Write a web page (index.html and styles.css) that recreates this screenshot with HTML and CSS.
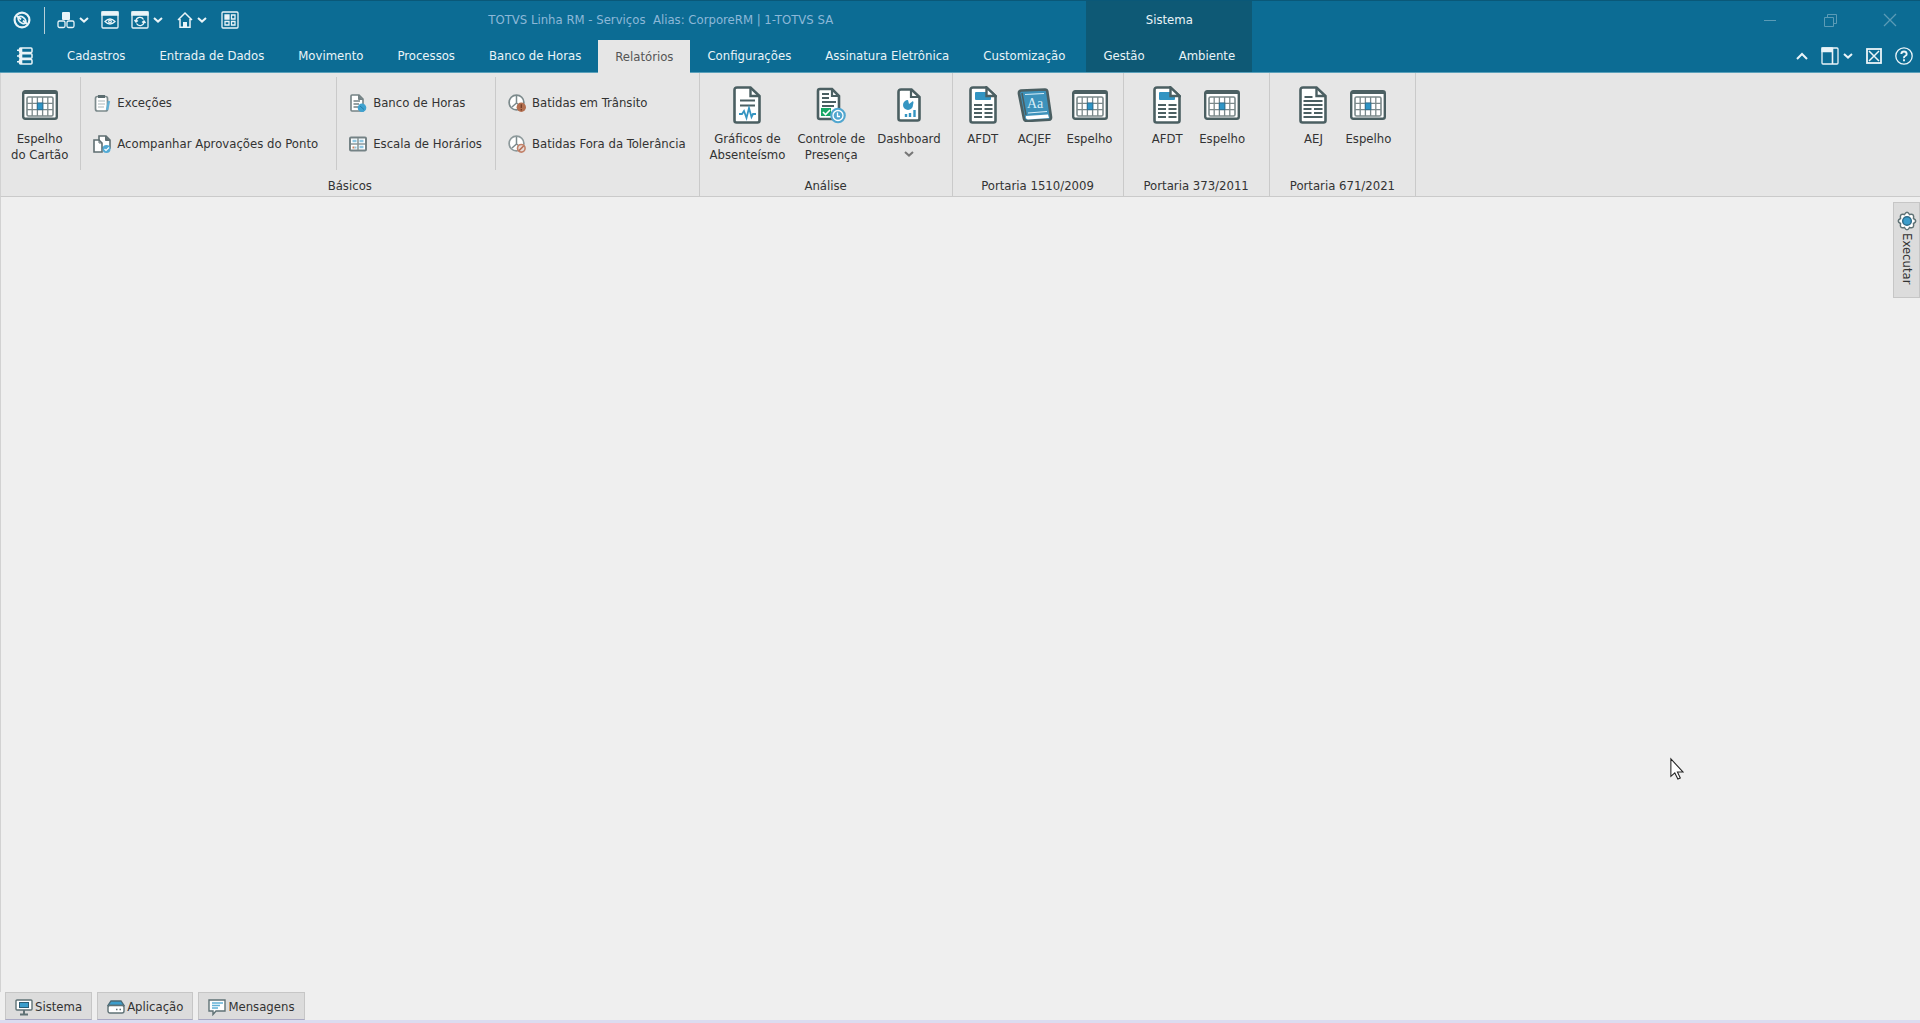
FILE: index.html
```html
<!DOCTYPE html>
<html lang="pt-BR">
<head>
<meta charset="utf-8">
<title>TOTVS Linha RM - Serviços</title>
<link rel="stylesheet" href="styles.css">
</head>
<body>
<svg class="sprite" aria-hidden="true">
  <symbol id="i-chev" viewBox="0 0 10 6"><path d="M1 1l4 3.600L9 1" fill="none" stroke="currentColor" stroke-width="2"/></symbol>
  <symbol id="i-cal" viewBox="0 0 36 30">
    <rect x="1.200" y="1.200" width="33.600" height="27.600" rx="2" fill="#fff" stroke="#4b5f62" stroke-width="2.400"/>
    <path d="M1 1h34v3H1z" fill="#4b5f62"/>
    <rect x="5" y="7" width="26" height="19" rx="1.500" fill="#fff" stroke="#7b898b" stroke-width="1.600"/>
    <path d="M10.200 7v19M15.400 7v19M20.600 7v19M25.800 7v19M5 13.300h26M5 19.600h26" stroke="#7b898b" stroke-width="1.300"/>
    <rect x="15.400" y="13" width="5.400" height="6.600" fill="#2f95c6" stroke="#2b7195"/>
  </symbol>
  <symbol id="i-afdt" viewBox="0 0 28 38">
    <path d="M4 1.500h13.500L26.500 10v24.500q0 2-2 2H3.500q-2 0-2-2V4q0-2.500 2.500-2.500z" fill="#fff" stroke="#4b5f62" stroke-width="2.600"/>
    <rect x="6" y="6" width="16" height="8" rx="1" fill="#3294c2"/>
    <path d="M17.500 1.500V10h9z" fill="#fff" stroke="#4b5f62" stroke-width="2.400"/>
    <path d="M5 19h8M5 23h8M5 27h8M5 31h8M15.500 19h8M15.500 23h8M15.500 27h8M15.500 31h8" stroke="#4b5f62" stroke-width="2"/>
  </symbol>
  <symbol id="i-aej" viewBox="0 0 28 38">
    <path d="M4 1.500h13.500L26.500 10v24.500q0 2-2 2H3.500q-2 0-2-2V4q0-2.500 2.500-2.500z" fill="#fff" stroke="#4b5f62" stroke-width="2.600"/>
    <path d="M17.500 1.500V10h9" fill="none" stroke="#4b5f62" stroke-width="2.400"/>
    <path d="M5.500 11h8M4.500 15h19M4.500 19h19M4.500 23h8M15 23h8.500M4.500 27h8M15 27h8.500M4.500 31h19" stroke="#4b5f62" stroke-width="2"/>
  </symbol>
</svg>

<header class="header">
  <div class="header-main">
    <div class="titlebar">
      <div class="quick">
        <button class="tool app" aria-label="Aplicativo"><svg width="18" height="18" viewBox="0 0 18 18" fill="none" stroke="currentColor"><circle cx="9" cy="9" r="7.400" stroke-width="2.200"/><path d="M4 5l4 3.500M10 9.500l4 3.500" stroke-width="2"/><ellipse cx="9" cy="9" rx="4.400" ry="2.800" transform="rotate(40 9 9)" stroke-width="1.800"/></svg></button>
        <span class="quick-sep"></span>
        <button class="tool cubes" aria-label="Módulos"><svg width="18" height="18" viewBox="0 0 18 18"><rect x="5" y="1" width="8" height="8" rx="1" fill="currentColor"/><g fill="none" stroke="currentColor" stroke-width="1.300"><rect x="1" y="10" width="7" height="6.500" rx="1.500"/><rect x="10" y="10" width="7" height="6.500" rx="1.500"/></g></svg><svg width="10" height="6"><use href="#i-chev"/></svg></button>
        <button class="tool eye" aria-label="Visualizar"><svg width="18" height="18" viewBox="0 0 18 18" fill="none" stroke="currentColor" stroke-width="1.300"><rect x="1" y="1" width="16" height="16" rx="1"/><path d="M1 1h16v3H1z" fill="currentColor"/><path d="M4 10.500q5-5 10 0q-5 5-10 0z"/><circle cx="9" cy="10.500" r="1.300"/></svg></button>
        <button class="tool sync" aria-label="Atualizar"><svg width="18" height="18" viewBox="0 0 18 18" fill="none" stroke="currentColor" stroke-width="1.300"><rect x="1" y="1" width="16" height="16" rx="1"/><path d="M1 1h16v3H1z" fill="currentColor"/><path d="M5 10a4 4 0 0 1 7.500-1.500M13 11a4 4 0 0 1-7.500 1.500M3.500 9l1.500 2 2-1.500M14.500 12L13 10l-2 1.500"/></svg><svg width="10" height="6"><use href="#i-chev"/></svg></button>
        <button class="tool home" aria-label="Início"><svg width="16" height="18" viewBox="0 0 16 18"><path d="M1 9l7-7 7 7M3 8v8.300h10V8" fill="none" stroke="currentColor" stroke-width="1.500"/><path d="M6 11h4v6H6z" fill="currentColor"/></svg><svg width="10" height="6"><use href="#i-chev"/></svg></button>
        <button class="tool" aria-label="Painel"><svg width="18" height="18" viewBox="0 0 18 18" fill="none" stroke="currentColor" stroke-width="1.300"><rect x="1" y="1" width="16" height="16" rx="1"/><path d="M4 4h4v4H4z" fill="currentColor"/><path d="M10.500 4H14v4h-3.500zM10.500 10.500H14V14h-3.500zM4 10.500h4V14H4z"/></svg></button>
      </div>
      <div class="title">TOTVS Linha RM - Serviços&nbsp; Alias: CorporeRM | 1-TOTVS SA</div>
    </div>
    <nav class="tabs">
      <button class="menu" aria-label="Menu"><svg width="16" height="18" viewBox="0 0 16 18" fill="none" stroke="currentColor" stroke-width="1.500"><rect x="2.500" y="1" width="12.500" height="4.500" rx="1"/><rect x="2.500" y="6.800" width="12.500" height="4.500" rx="1"/><rect x="2.500" y="12.500" width="12.500" height="4.500" rx="1"/><path d="M4 1v16" stroke-width="2.600"/><path d="M0 3.200h4M0 9h4M0 14.800h4"/></svg></button>
      <button class="tab">Cadastros</button><button class="tab">Entrada de Dados</button><button class="tab">Movimento</button><button class="tab">Processos</button><button class="tab">Banco de Horas</button><button class="tab active">Relatórios</button><button class="tab">Configurações</button><button class="tab">Assinatura Eletrônica</button><button class="tab">Customização</button>
    </nav>
  </div>
  <div class="context">
    <div class="context-title">Sistema</div>
    <nav class="tabs"><button class="tab">Gestão</button><button class="tab">Ambiente</button></nav>
  </div>
  <div class="header-end">
    <div class="window">
      <button aria-label="Minimizar"><svg width="14" height="14"><path d="M1 7.500h12" stroke="currentColor"/></svg></button>
      <button aria-label="Restaurar"><svg width="14" height="14" fill="none" stroke="currentColor"><path d="M1.500 4.500h9v9h-9zM4.500 4.500v-3h9v9h-3"/></svg></button>
      <button aria-label="Fechar"><svg width="14" height="14"><path d="M1 1l12 12M13 1L1 13" stroke="currentColor" stroke-width="1.300"/></svg></button>
    </div>
    <div class="helpers">
      <button class="tool" aria-label="Recolher"><svg width="12" height="8" viewBox="0 0 12 8"><path d="M1 7l5-5 5 5" fill="none" stroke="currentColor" stroke-width="2"/></svg></button>
      <button class="tool" aria-label="Layout"><svg width="18" height="18" viewBox="0 0 18 18" fill="none" stroke="currentColor" stroke-width="1.300"><rect x="1" y="1" width="16" height="16" rx="1"/><path d="M1 1h10v3.500H1z" fill="currentColor"/><path d="M11.500 1v16" stroke-width="1.600"/></svg><svg width="10" height="6"><use href="#i-chev"/></svg></button>
      <button class="tool" aria-label="Fechar todas"><svg width="16" height="16" viewBox="0 0 16 16" fill="none" stroke="currentColor"><rect x="1" y="1" width="14" height="14" stroke-width="1.800"/><path d="M3 3l10 10M13 3L3 13" stroke-width="1.500"/></svg></button>
      <button class="tool" aria-label="Ajuda"><svg width="18" height="18" viewBox="0 0 18 18" fill="none" stroke="currentColor"><circle cx="9" cy="9" r="8.200" stroke-width="1.300"/><path d="M6.300 7q.2-2.500 2.700-2.500T11.700 7q0 1.300-1.500 2T9 11.200M9 12.300v1.900" stroke-width="1.900"/></svg></button>
    </div>
  </div>
</header>

<main class="ribbon">
  <section class="group">
    <div class="group-body">
      <div class="column first"><button class="large"><span class="pic"><svg width="36" height="30"><use href="#i-cal"/></svg></span>Espelho<br>do Cartão</button></div>
      <div class="column roomy">
        <button class="small"><svg width="18" height="18" viewBox="0 0 18 18"><rect x="2.500" y="2.500" width="12" height="14.500" rx="2" fill="#fff" stroke="#7c8a8c" stroke-width="1.700"/><path d="M5 1h7v3H5z" fill="#5b6c6f"/><path d="M5 7h7M5 10h7M5 13h6" stroke="#a9b7ba"/><path d="M16 7l-2 9" stroke="#62b1d6" stroke-width="2.400"/></svg>Exceções</button>
        <button class="small"><svg width="18" height="18" viewBox="0 0 18 18"><path d="M6 1h7l4 4v8H6z" fill="#fff" stroke="#5f6f72" stroke-width="1.600"/><path d="M12.500 1v4.500H17" fill="#5f6f72" stroke="#5f6f72"/><path d="M1 5h5l3 3v9H1z" fill="#fff" stroke="#5f6f72" stroke-width="1.600"/><path d="M6 5v3h3" fill="none" stroke="#5f6f72"/><circle cx="13.500" cy="14" r="4" fill="#52aad5"/><path d="M11.500 14l1.500 1.500 3-3" fill="none" stroke="#fff" stroke-width="1.200"/></svg>Acompanhar Aprovações do Ponto</button>
      </div>
      <div class="column">
        <button class="small"><svg width="18" height="18" viewBox="0 0 18 18"><path d="M3 1h7l4 4v12H3q-1 0-1-1V2q0-1 1-1z" fill="#fff" stroke="#748285" stroke-width="1.600"/><path d="M9.500 1v4.500H14" fill="#748285" stroke="#748285"/><path d="M4.500 7H11M4.500 10H10M4.500 13H9" stroke="#748285" stroke-width="1.300"/><circle cx="13" cy="13.700" r="4.300" fill="#3fa2d0"/><path d="M11 12l4 3.500" stroke="#247ca7"/></svg>Banco de Horas</button>
        <button class="small"><svg width="18" height="18" viewBox="0 0 18 18"><rect x="1" y="2.500" width="16" height="13" rx="1" fill="#fff" stroke="#748285" stroke-width="2"/><path d="M9 3v12M2 9h14" stroke="#8b989a" stroke-width="1.600"/><path d="M3.500 6h4M10.500 6h4M10.500 12h4" stroke="#8cc6e2" stroke-width="2.400"/><path d="M3.500 12.500h2" stroke="#cf8462" stroke-width="2"/><path d="M5.500 12.500h2" stroke="#8cc6e2" stroke-width="2"/></svg>Escala de Horários</button>
      </div>
      <div class="column">
        <button class="small"><svg width="18" height="18" viewBox="0 0 18 18"><circle cx="8.500" cy="8.500" r="7.400" fill="#fff" stroke="#7c8a8c" stroke-width="1.700"/><path d="M8.500 2v7L4 13M8.500 9l4 3" fill="none" stroke="#7c8a8c" stroke-width="1.500"/><circle cx="13.300" cy="13.300" r="4.700" fill="#b36f50"/><path d="M13.300 10.300v3.700M13.300 15v1.500" stroke="#733d25" stroke-width="1.300"/></svg>Batidas em Trânsito</button>
        <button class="small"><svg width="18" height="18" viewBox="0 0 18 18"><circle cx="8.500" cy="8.500" r="7.400" fill="#fff" stroke="#8d999b" stroke-width="1.700"/><path d="M8.500 2v7L4 13M8.500 9l4 3" fill="none" stroke="#7c8a8c" stroke-width="1.500"/><circle cx="13.300" cy="13.300" r="3.800" fill="#e7dcd9" stroke="#c28168" stroke-width="1.600"/><path d="M11 15.600l4.600-4.600" stroke="#b66f55" stroke-width="1.500"/></svg>Batidas Fora da Tolerância</button>
      </div>
    </div>
    <h2>Básicos</h2>
  </section>

  <section class="group">
    <div class="group-body wide">
      <button class="large"><span class="pic"><svg width="28" height="38" viewBox="0 0 28 38"><path d="M4 1.500h13.500L26.500 10v24.500q0 2-2 2H3.500q-2 0-2-2V4q0-2.500 2.500-2.500z" fill="#fff" stroke="#4b5f62" stroke-width="2.600"/><path d="M17.500 1.500V10h9" fill="none" stroke="#4b5f62" stroke-width="2.400"/><path d="M7 14.500h15M7 19.500h15" stroke="#4b5f62" stroke-width="2"/><path d="M6 28h3l2-3 2.500 7L16 22l2.500 9 1.500-3h3" fill="none" stroke="#3595c2" stroke-width="1.800"/></svg></span>Gráficos de<br>Absenteísmo</button>
      <button class="large"><span class="pic"><svg width="30" height="38" viewBox="0 0 30 38"><path d="M4 3h12l7 7v23H4q-2 0-2-2V5q0-2 2-2z" fill="#fff" stroke="#4b5f62" stroke-width="2.600"/><path d="M16 3v7h7" fill="none" stroke="#4b5f62" stroke-width="2.200"/><path d="M6 8h7M6 12h7M6 16h14M6 20h12" stroke="#4b5f62" stroke-width="2"/><path d="M5 22h10v8H5z" fill="#17a765"/><path d="M7 26l2.500 2.500L14 24" fill="none" stroke="#fff" stroke-width="1.600"/><circle cx="22" cy="29.500" r="7.800" fill="#51a6cf"/><circle cx="22" cy="29.500" r="5" fill="none" stroke="#fff" stroke-width="1.300"/><path d="M21.500 26.500v4h2.500" fill="none" stroke="#fff" stroke-width="1.300"/></svg></span>Controle de<br>Presença</button>
      <button class="large"><span class="pic"><svg width="24" height="34" viewBox="0 0 24 34"><path d="M4 1.500h10.500L22.500 9v21.500q0 2-2 2H3.500q-2 0-2-2V4q0-2.500 2.500-2.500z" fill="#fff" stroke="#4b5f62" stroke-width="2.600"/><path d="M14 1.500V9h8" fill="none" stroke="#4b5f62" stroke-width="2.200"/><path d="M11 12a5 5 0 1 0 5 5q1-3 0-4l-4 3z" fill="#3595c2"/><path d="M9 29v-3M13 29v-4M17.500 29v-7" stroke="#3595c2" stroke-width="2.400"/></svg></span>Dashboard<span class="drop"><svg width="10" height="6"><use href="#i-chev"/></svg></span></button>
    </div>
    <h2>Análise</h2>
  </section>

  <section class="group">
    <div class="group-body center">
      <button class="large"><span class="pic"><svg width="28" height="38"><use href="#i-afdt"/></svg></span>AFDT</button>
      <button class="large"><span class="pic"><svg width="36" height="34" viewBox="0 0 36 34"><path d="M4 2.500L28 1.500q2 0 2.300 2L34 29q.3 2.500-2 2.700L10 33q-2.500 0-3-2L2 6Q1.500 3 4 2.500z" fill="#3d92bb" stroke="#4b5f62" stroke-width="2.600"/><path d="M9 28l22-1.500 1 3.500-21 1.500q-3-1-2-3.500z" fill="#fff"/><path d="M5 5l4 22" stroke="#4b5f62" stroke-width="1.500"/><path d="M8 6.500L27 5.500M11 25l19-1.500" stroke="#d8eef8" stroke-width="1.200"/><text x="10" y="20" fill="#d8eef8" class="book">Aa</text></svg></span>ACJEF</button>
      <button class="large"><span class="pic"><svg width="36" height="30"><use href="#i-cal"/></svg></span>Espelho</button>
    </div>
    <h2>Portaria 1510/2009</h2>
  </section>

  <section class="group">
    <div class="group-body center">
      <button class="large"><span class="pic"><svg width="28" height="38"><use href="#i-afdt"/></svg></span>AFDT</button>
      <button class="large"><span class="pic"><svg width="36" height="30"><use href="#i-cal"/></svg></span>Espelho</button>
    </div>
    <h2>Portaria 373/2011</h2>
  </section>

  <section class="group">
    <div class="group-body center">
      <button class="large"><span class="pic"><svg width="28" height="38"><use href="#i-aej"/></svg></span>AEJ</button>
      <button class="large"><span class="pic"><svg width="36" height="30"><use href="#i-cal"/></svg></span>Espelho</button>
    </div>
    <h2>Portaria 671/2021</h2>
  </section>
</main>

<div class="workspace">
  <button class="side"><svg width="20" height="20" viewBox="0 0 20 20"><path d="M7.500 3.500Q10-1 12.500 3.500Q17.500 2 16.500 7.500Q21 10 16.500 12.500Q17.500 18 12.500 16.500Q10 21 7.500 16.500Q2.500 18 3.500 12.500Q-1 10 3.500 7.500Q2.500 2 7.500 3.500z" fill="#fff" stroke="#5f7275" stroke-width="1.500"/><circle cx="10" cy="10" r="4.300" fill="#3c9dcb" stroke="#2f6d8a" stroke-width="1.500"/></svg>Executar</button>
</div>

<footer class="dock">
  <button class="dock-tab"><svg width="18" height="18" viewBox="0 0 18 18"><rect x="1" y="2" width="16" height="10" rx="1" fill="#fff" stroke="#5f7275" stroke-width="1.400"/><rect x="4.500" y="4.500" width="9" height="5" fill="#3c9dcb" stroke="#2b5d75"/><path d="M9 12v4M5 16.500h8" stroke="#5f7275" stroke-width="2"/></svg>Sistema</button>
  <button class="dock-tab"><svg width="18" height="18" viewBox="0 0 18 18"><path d="M4 3h10l3 4.500H1z" fill="#3c9dcb" stroke="#4b6a76" stroke-width="1.300"/><rect x="1" y="7.500" width="16" height="7.500" rx="2" fill="#fff" stroke="#5f7275" stroke-width="1.400"/><path d="M9 11.500h1.500M12.500 11.500H14" stroke="#5f7275" stroke-width="1.500"/></svg>Aplicação</button>
  <button class="dock-tab"><svg width="18" height="18" viewBox="0 0 18 18"><path d="M1 2h16v11H8l-3 3.500V13H1z" fill="#fff" stroke="#5f7275" stroke-width="1.400"/><path d="M4 5h11M4 7.500h8M4 10h6" stroke="#62b1d6" stroke-width="1.400"/></svg>Mensagens</button>
</footer>

<svg class="cursor" width="14" height="24" viewBox="0 0 16 25" aria-hidden="true"><path d="M1 1v20l4.500-4 3.500 7 2.800-1.300L8.500 16H15z" fill="#fff" stroke="#222" stroke-width="1.200"/></svg>
</body>
</html>
```
FILE: styles.css
```css
* { box-sizing: border-box; }

body {
  margin: 0;
  min-height: 100vh;
  display: flex;
  flex-direction: column;
  position: relative;
  background: #efefef;
  color: #333;
  font: 13px/16px "DejaVu Sans Condensed", Tahoma, sans-serif;
}

.sprite { display: none; }
svg { flex: none; }

button {
  margin: 0;
  padding: 0;
  border: 0;
  background: none;
  color: inherit;
  font: inherit;
  white-space: nowrap;
}

/* Header */
.header {
  display: flex;
  background: #0c6c94;
  color: #eaf4f8;
  border-top: 1px solid #0a5878;
  border-bottom: 1px solid #5aa0ba;
}
.header-main, .context, .header-end { display: flex; flex-direction: column; }
.header-main { padding-right: 4px; }
.titlebar { display: flex; align-items: center; height: 38px; }
.quick { display: flex; align-items: center; padding-left: 13px; }
.tool { display: flex; align-items: center; gap: 4px; }
.app { margin-right: 13px; }
.quick-sep { width: 1px; height: 27px; background: #b8cfd8; margin-right: 12px; }
.cubes, .eye { margin-right: 12px; }
.sync, .home { margin-right: 14px; }
.title { flex: 1; text-align: center; color: #8cb8d8; }

.tabs { display: flex; height: 33px; }
.menu { width: 50px; display: flex; align-items: center; padding-left: 17px; }
.tab { padding: 1px 17px 0; }
.tab.active { background: #e6e6e6; color: #555; margin: 1px 0 -1px; padding-top: 0; }

.context { background: #0e5975; }
.context-title { height: 38px; line-height: 38px; text-align: center; }

.header-end { flex: 1; align-items: flex-end; }
.window { display: flex; height: 38px; color: #5b9bb6; }
.window button { width: 60px; display: flex; align-items: center; justify-content: center; }
.helpers { display: flex; align-items: center; height: 33px; gap: 13px; padding-right: 7px; }

/* Ribbon */
.ribbon {
  display: flex;
  background: #e6e6e6;
  border-bottom: 1px solid #cacaca;
  border-left: 1px solid #d2d2d2;
}
.group {
  display: flex;
  flex-direction: column;
  border-right: 1px solid #cacaca;
}
.group-body { display: flex; height: 97px; padding-top: 4px; }
.group-body.wide { padding-left: 4px; padding-right: 5px; }
.group-body.center { justify-content: center; padding-left: 4px; padding-right: 4px; }
.group h2 {
  margin: 0;
  padding: 8px 20px 2px;
  font: inherit;
  text-align: center;
  white-space: nowrap;
}
.column {
  padding: 5px 13px 5px 12px;
  border-left: 1px solid #cacaca;
  display: flex;
  flex-direction: column;
}
.column.roomy { padding-right: 18px; }
.column.first { border-left: 0; padding: 0 6px 0 4px; }
.small { display: flex; align-items: center; gap: 6px; height: 41px; }
.large {
  min-width: 52px;
  padding: 8px 6px 0;
  display: flow-root;
  align-self: flex-start;
  text-align: center;
}
.pic { display: flex; align-items: center; justify-content: center; height: 40px; margin-bottom: 6px; }
.drop { display: flex; justify-content: center; padding-top: 4px; color: #777; }
.book { font: 14px "Liberation Serif", serif; }

/* Work area */
.workspace {
  flex: 1;
  display: flex;
  justify-content: flex-end;
  align-items: flex-start;
  padding-top: 5px;
  border-left: 1px solid #d2d2d2;
}
.side {
  width: 27px;
  display: flex;
  align-items: center;
  padding: 8px 0 12px;
  gap: 2px;
  writing-mode: vertical-rl;
  background: #dcdcdc;
  border: 1px solid #c6c6c6;
}

.dock {
  display: flex;
  gap: 5px;
  padding-left: 5px;
  border-bottom: 3px solid #dcdcf0;
}
.dock-tab {
  display: flex;
  align-items: center;
  gap: 2px;
  height: 28px;
  padding: 2px 9px 0;
  background: #dcdcdc;
  border: 1px solid #c6c6c6;
  border-bottom-color: #a9a9c4;
}

.cursor { position: absolute; left: 87%; top: 74%; }
```
